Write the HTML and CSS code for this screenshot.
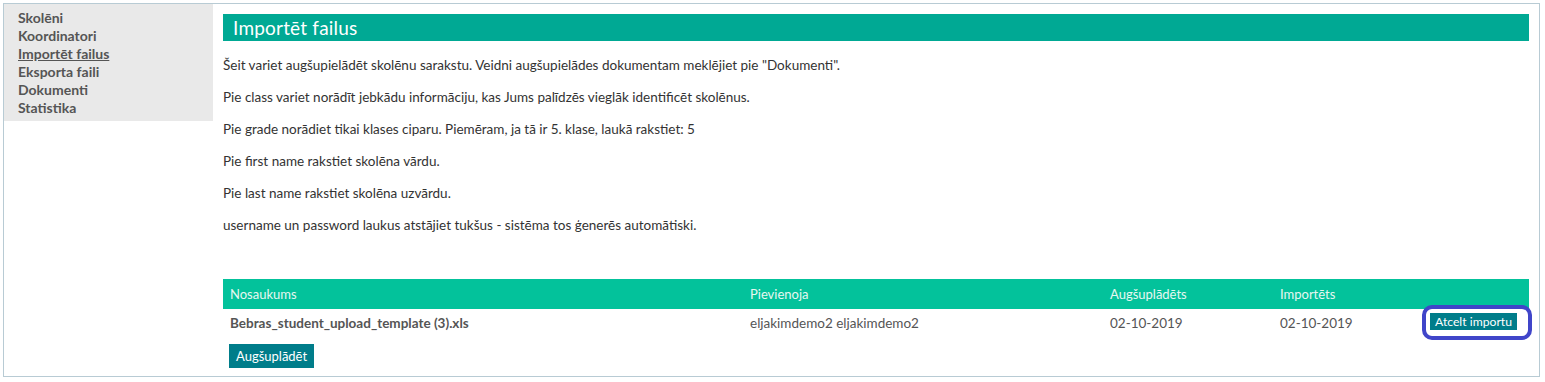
FILE: index.html
```html
<!DOCTYPE html>
<html lang="lv">
<head>
    <meta charset="UTF-8">
    <title>Importēt failus</title>
    <link rel="stylesheet" href="styles.css">
</head>
<body>
    <div class="page">
        <div class="sidebar">
            <a href="#">Skolēni</a>
            <a href="#">Koordinatori</a>
            <a href="#" class="active">Importēt failus</a>
            <a href="#">Eksporta faili</a>
            <a href="#">Dokumenti</a>
            <a href="#">Statistika</a>
        </div>

        <div class="content">
            <h1 class="title">Importēt failus</h1>
            <p>Šeit variet augšupielādēt skolēnu sarakstu. Veidni augšupielādes dokumentam meklējiet pie "Dokumenti".</p>
            <p>Pie class variet norādīt jebkādu informāciju, kas Jums palīdzēs vieglāk identificēt skolēnus.</p>
            <p>Pie grade norādiet tikai klases ciparu. Piemēram, ja tā ir 5. klase, laukā rakstiet: 5</p>
            <p>Pie first name rakstiet skolēna vārdu.</p>
            <p>Pie last name rakstiet skolēna uzvārdu.</p>
            <p>username un password laukus atstājiet tukšus - sistēma tos ģenerēs automātiski.</p>

            <table class="files">
                <colgroup>
                    <col class="c-name">
                    <col class="c-user">
                    <col class="c-date">
                    <col class="c-date2">
                    <col>
                </colgroup>
                <thead>
                    <tr>
                        <th>Nosaukums</th>
                        <th>Pievienoja</th>
                        <th>Augšuplādēts</th>
                        <th>Importēts</th>
                        <th></th>
                    </tr>
                </thead>
                <tbody>
                    <tr>
                        <td class="file">Bebras_student_upload_template (3).xls</td>
                        <td>eljakimdemo2 eljakimdemo2</td>
                        <td>02-10-2019</td>
                        <td>02-10-2019</td>
                        <td class="c-action"><span class="marked"><button class="btn small">Atcelt importu</button><span class="mark"></span></span></td>
                    </tr>
                </tbody>
            </table>

            <button class="btn upload">Augšuplādēt</button>
        </div>
    </div>
</body>
</html>
```

FILE: styles.css
```css
body {
    margin: 0;
    padding: 3px 5px 3px 3px;
    font-family: "Source Sans Pro", Lato, "Noto Sans", sans-serif;
    font-size: 13.5px;
    color: #333;
}
.page {
    display: flex;
    align-items: flex-start;
    border: 1px solid #b8cbd4;
    height: 374px;
    box-sizing: border-box;
}
.sidebar {
    width: 209px;
    background-color: #e9e9e9;
    padding: 5px 0 4px 14px;
    box-sizing: border-box;
    display: flex;
    flex-direction: column;
}
.sidebar a {
    font-size: 14px;
    font-weight: bold;
    color: #555;
    text-decoration: none;
    line-height: 18px;
}
.sidebar a.active {
    text-decoration: underline;
}
.content {
    flex: 1;
    padding: 10px 10px 0 10px;
}
.title {
    margin: 0 0 15px 0;
    background-color: #00a994;
    color: #fff;
    font-weight: normal;
    font-size: 19px;
    letter-spacing: 0.2px;
    line-height: 27px;
    padding: 0 10px;
}
.content p {
    margin: 0 0 14px 0;
    line-height: 18px;
}
.files {
    width: 100%;
    margin-top: 45px;
    border-collapse: collapse;
    table-layout: fixed;
}
.c-name { width: 520px; }
.c-user { width: 360px; }
.c-date { width: 170px; }
.c-date2 { width: 149px; }
.files th {
    background-color: #03c29b;
    color: #e6f7f1;
    font-size: 13px;
    font-weight: normal;
    text-align: left;
    height: 30px;
    padding: 0 7px;
}
.files td {
    color: #555;
    padding: 0 7px;
    height: 28px;
}
.files td.file {
    font-weight: bold;
}
.files td.c-action {
    vertical-align: top;
    padding: 4px 0 0 8px;
    height: 24px;
    white-space: nowrap;
}
.marked {
    position: relative;
    display: inline-block;
    vertical-align: top;
    line-height: 0;
}
.mark {
    position: absolute;
    top: -8px;
    left: -8px;
    right: -15px;
    bottom: -10px;
    border: 4px solid #4045c9;
    border-radius: 10px;
}
.btn {
    background-color: #007d8a;
    color: #fff;
    border: none;
    font-family: inherit;
    cursor: pointer;
    white-space: nowrap;
}
.btn.small {
    display: block;
    font-size: 12.2px;
    padding: 0 5px;
    height: 17px;
    line-height: 17px;
}
.btn.upload {
    margin: 7px 0 0 6px;
    font-size: 13px;
    padding: 0 7px;
    height: 24px;
}
```
